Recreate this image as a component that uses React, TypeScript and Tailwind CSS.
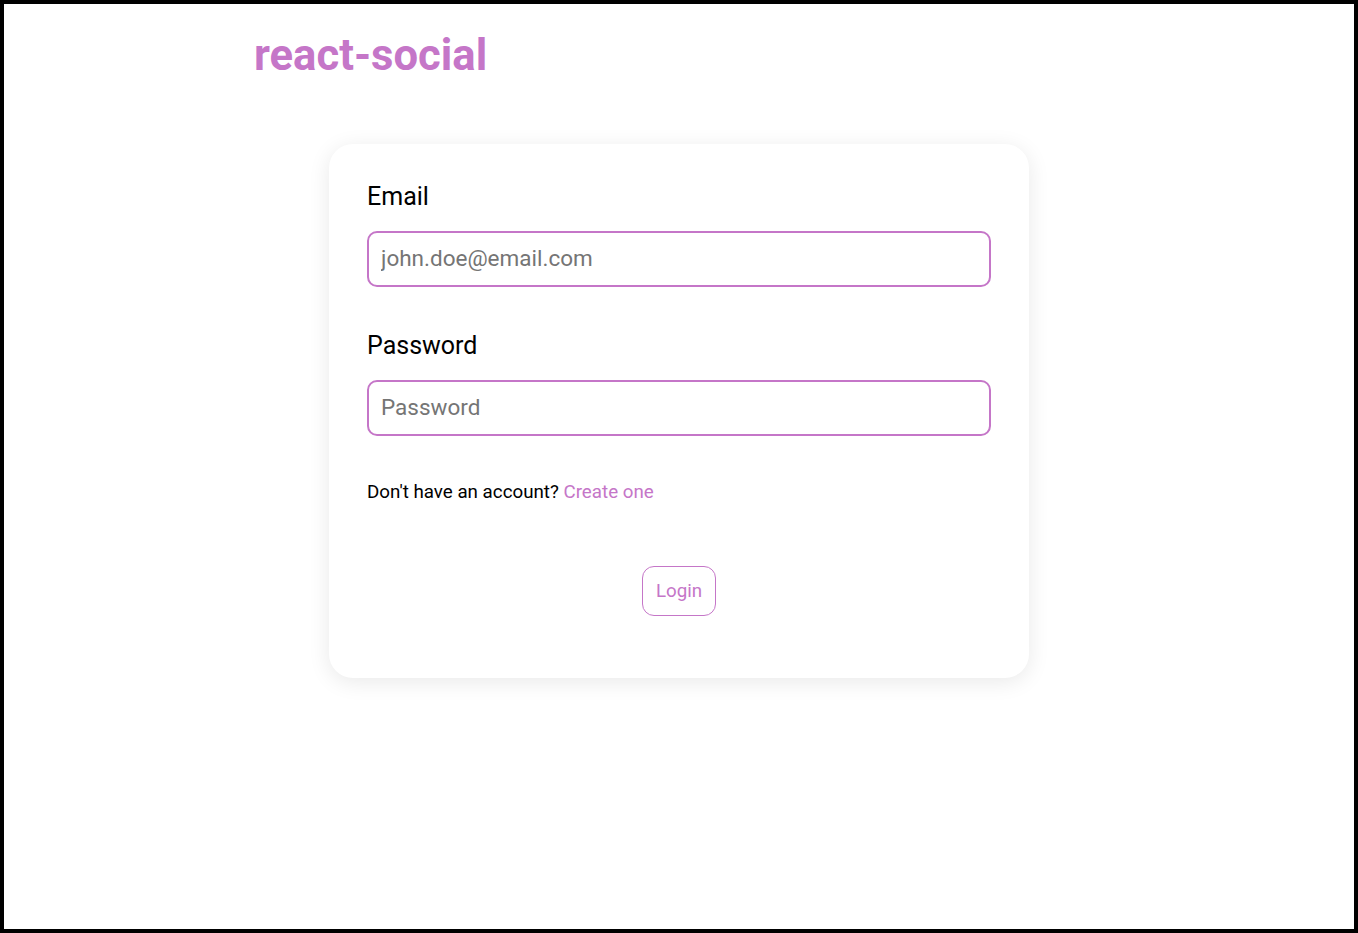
export default function App() {
  return (
    <div className="h-[933px] w-full border-4 border-black bg-white font-['Roboto',sans-serif]">
      <div className="mx-auto w-[850px]">
        <h1 className="mt-[26px] text-[43.6px] font-bold leading-[52px] text-[#c576c8]">react-social</h1>

        <form className="mx-auto mt-[62px] flex w-[700px] flex-col rounded-[24px] bg-white px-[38px] pb-[62px] pt-[38px] shadow-[0_4px_22px_rgba(0,0,0,0.09)]">
          <label className="text-[25px] leading-[29px] text-black">Email</label>
          <input
            type="email"
            placeholder="john.doe@email.com"
            className="mt-[20px] h-[56px] rounded-[10px] border-2 border-[#c576c8] px-[12px] pb-[2px] text-[22.5px] text-black outline-none placeholder:text-[#757575]"
          />

          <label className="mt-[44px] text-[25px] leading-[29px] text-black">Password</label>
          <input
            type="password"
            placeholder="Password"
            className="mt-[20px] h-[56px] rounded-[10px] border-2 border-[#c576c8] px-[12px] pb-[2px] text-[22.5px] text-black outline-none placeholder:text-[#757575]"
          />

          <p className="mt-[44px] text-[18.75px] leading-[24px] text-black">
            Don't have an account? <a className="text-[#c576c8]">Create one</a>
          </p>

          <button
            type="button"
            className="mx-auto mt-[62px] h-[50px] rounded-[12px] border border-[#c576c8] px-[13px] text-[18.75px] leading-[24px] text-[#c576c8]"
          >
            Login
          </button>
        </form>
      </div>
    </div>
  )
}
